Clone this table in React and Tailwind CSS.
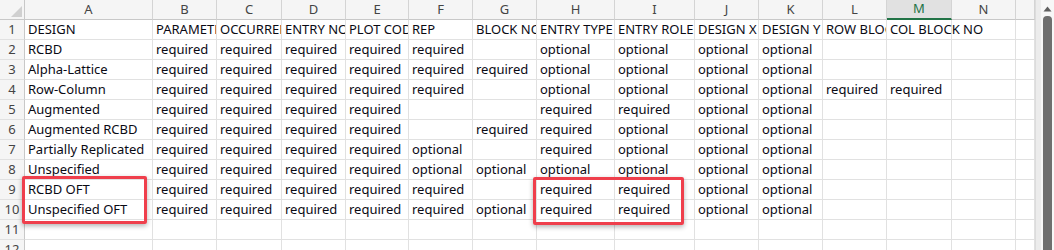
import React from 'react';

const COLS = ['A', 'B', 'C', 'D', 'E', 'F', 'G', 'H', 'I', 'J', 'K', 'L', 'M', 'N', ''];

const R = 'required';
const O = 'optional';

// sheet contents, row 1 is the header line of the template
const ROWS = [
  ['DESIGN', 'PARAMETER', 'OCCURRENCE', 'ENTRY NO', 'PLOT CODE', 'REP', 'BLOCK NO', 'ENTRY TYPE', 'ENTRY ROLE', 'DESIGN X', 'DESIGN Y', 'ROW BLOCK NO', 'COL BLOCK NO', '', ''],
  ['RCBD', R, R, R, R, R, '', O, O, O, O, '', '', '', ''],
  ['Alpha-Lattice', R, R, R, R, R, R, O, O, O, O, '', '', '', ''],
  ['Row-Column', R, R, R, R, R, '', O, O, O, O, R, R, '', ''],
  ['Augmented', R, R, R, R, '', '', R, R, O, O, '', '', '', ''],
  ['Augmented RCBD', R, R, R, R, '', R, R, O, O, O, '', '', '', ''],
  ['Partially Replicated', R, R, R, R, O, '', R, O, O, O, '', '', '', ''],
  ['Unspecified', R, R, R, R, O, O, O, O, O, O, '', '', '', ''],
  ['RCBD OFT', R, R, R, R, R, '', R, R, O, O, '', '', '', ''],
  ['Unspecified OFT', R, R, R, R, R, O, R, R, O, O, '', '', '', ''],
  ['', '', '', '', '', '', '', '', '', '', '', '', '', '', ''],
  ['', '', '', '', '', '', '', '', '', '', '', '', '', '', ''],
];

const Cell = ({ text, spill }) => (
  <div
    className={`h-5 flex items-end pb-[1px] px-[3px] border-r border-b border-[#e1e1e1] whitespace-nowrap text-[13px] leading-[17px] text-[#0a0a14] ${
      spill ? 'overflow-visible' : 'overflow-hidden'
    }`}
  >
    {text}
  </div>
);

const ColHeader = ({ label }) => {
  const active = label === 'M';
  return (
    <div
      className={`h-5 flex items-center justify-center border-r text-[13px] ${
        active
          ? 'bg-[#e1e1e1] border-[#d4d4d4] border-b-2 border-b-[#217346] text-[#217346]'
          : 'bg-[#f5f5f5] border-[#d4d4d4] border-b border-b-[#c8c8c8] text-[#444]'
      }`}
    >
      {label}
    </div>
  );
};

const Corner = () => (
  <div className="h-5 bg-[#f5f5f5] border-r border-b border-[#c8c8c8] flex items-end justify-end p-[2px]">
    <svg width="11" height="11" viewBox="0 0 11 11">
      <path d="M11 0 L11 11 L0 11 Z" fill="#d0d0d0" />
    </svg>
  </div>
);

const ScrollBar = () => (
  <div className="flex h-full">
    <div className="w-[6px] bg-[#ececec] border-l border-[#dcdcdc]" />
    <div className="w-[13px] bg-[#f7f7f7] flex flex-col items-center pt-[6px]">
      <svg width="9" height="6" viewBox="0 0 9 6">
        <path d="M4.5 0.5 L8.5 5.5 L0.5 5.5 Z" fill="#5f5f5f" />
      </svg>
      <div className="mt-[4px] w-[9px] flex-1 bg-[#6e6e6e] rounded-t-[4px]" />
    </div>
  </div>
);

export default function App() {
  return (
    <div className="w-[1054px] h-[250px] overflow-hidden bg-white flex font-['Noto_Sans','Liberation_Sans',sans-serif]">
      <div className="relative w-[1035px] h-full overflow-hidden">
        <div className="grid grid-cols-[25px_128px_64px_65px_64px_63px_64px_64px_78px_80px_64px_64px_64px_65px_64px_19px]">
          <Corner />
          {COLS.map((c, i) => (
            <ColHeader key={i} label={c} />
          ))}

          {ROWS.map((row, r) => (
            <React.Fragment key={r}>
              <div className="h-5 flex items-center justify-center bg-[#f5f5f5] border-r border-r-[#c8c8c8] border-b border-b-[#e1e1e1] text-[13px] text-[#444]">
                {r + 1}
              </div>
              {row.map((v, c) => (
                <Cell key={c} text={v} spill={v && !row[c + 1]} />
              ))}
            </React.Fragment>
          ))}
        </div>

        {/* highlight frames */}
        <div className="absolute left-[22px] top-[176px] w-[125px] h-[48px] border-[3px] border-[#ef3f4c] rounded-[2px] shadow-[0_2px_5px_rgba(0,0,0,0.3)]" />
        <div className="absolute left-[533px] top-[177px] w-[151px] h-[48px] border-[3px] border-[#ef3f4c] rounded-[2px] shadow-[0_2px_5px_rgba(0,0,0,0.3)]" />
      </div>
      <ScrollBar />
    </div>
  );
}
